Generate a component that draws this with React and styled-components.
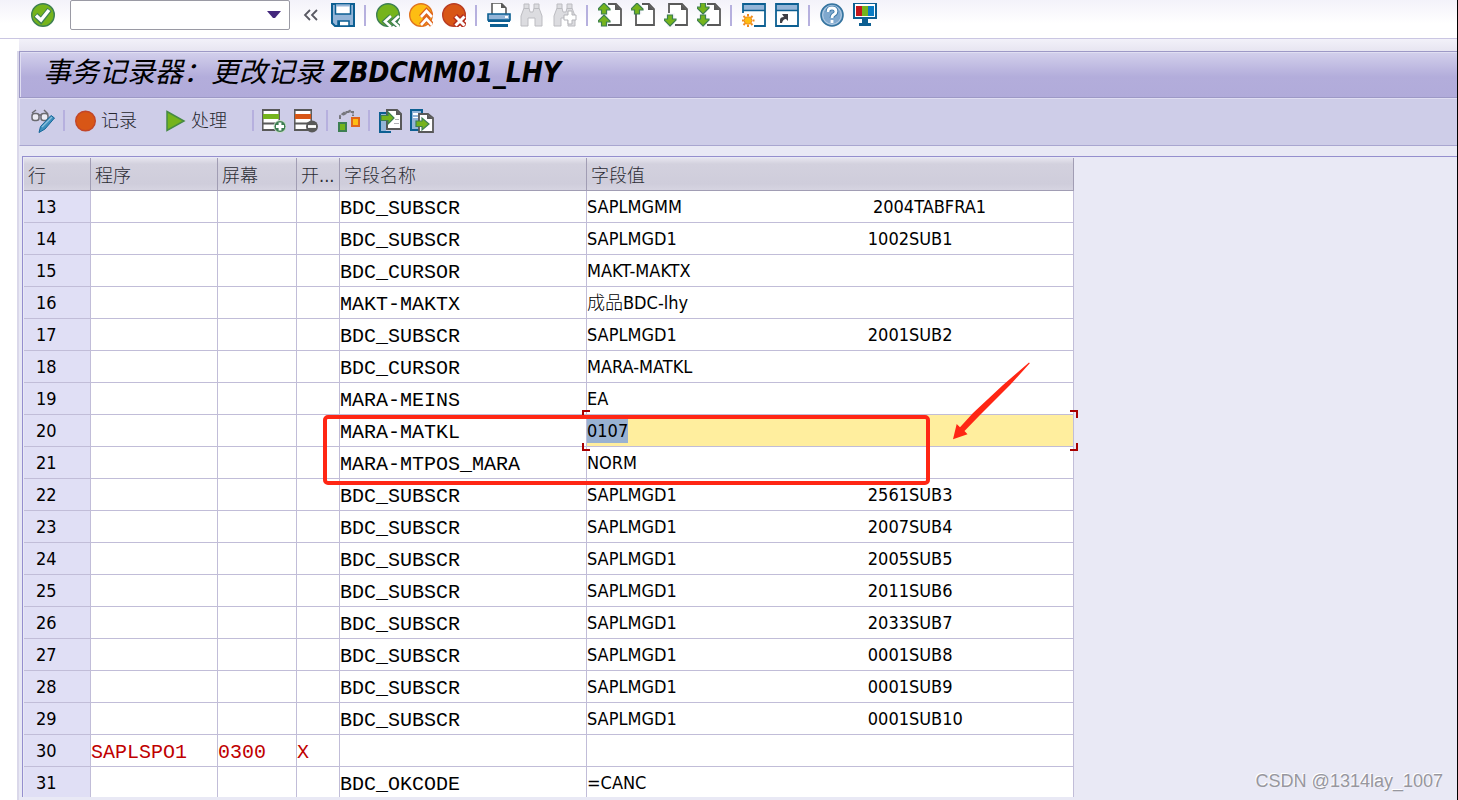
import React from 'react';
import styled, { createGlobalStyle } from "styled-components";

const GlobalStyle = createGlobalStyle`
    * {
        box-sizing: border-box;
    }
    body {
        margin: 0;
        background: #ffffff;
        color: #000000;
        font-family: "DejaVu Sans Condensed", "Noto Sans", "Noto Sans CJK SC", sans-serif;
        font-size: 18px;
    }
`;

const Page = styled.div`
    position: relative;
    display: flex;
    flex-direction: column;
    height: 100vh;
    overflow: hidden;
    border-right: 1px solid #000000;
`;

const SystemBar = styled.header`
    flex: none;
    display: flex;
    align-items: center;
    gap: 9px;
    height: 39px;
    padding: 0 31px 8px;
    background: linear-gradient(#f3f2fa, #ffffff 24px);
    border-bottom: 1px solid #cac6e2;
`;

const ToolButton = styled.button`
    flex: none;
    display: flex;
    align-items: center;
    gap: 4px;
    padding: 0;
    border: none;
    background: none;
    color: #26262e;
    font-family: inherit;
    font-size: 18px;
    font-weight: 300;
    line-height: 24px;
    white-space: nowrap;
`;

const Divider = styled.span`
    flex: none;
    width: ${({ $wide }) => $wide ? "3px" : "2px"};
    height: 21px;
    border-left: 2px solid #b6b0de;
`;

const CommandBox = styled.div`
    flex: none;
    display: flex;
    align-items: center;
    width: 220px;
    height: 30px;
    margin: 0 3px 0 6px;
    padding-right: 8px;
    border: 1px solid #9a9aa4;
    border-radius: 2px;
    background: #ffffff;
`;

const CommandInput = styled.input`
    flex: 1;
    min-width: 0;
    height: 100%;
    border: none;
    outline: none;
    background: none;
    font-family: inherit;
    font-size: 18px;
`;

const Main = styled.main`
    flex: 1;
    display: flex;
    flex-direction: column;
    min-height: 0;
    padding: 12px 0 0 17px;
    background: linear-gradient(#f2f1f9, #e7e5f1 12px, #ffffff 12px, #ffffff) 19px 0 no-repeat;
`;

const Session = styled.section`
    flex: 1;
    display: flex;
    flex-direction: column;
    min-height: 0;
    border-left: 2px solid #dad8ea;
    background: #e9e9f5;
`;

const TitleBar = styled.div`
    flex: none;
    display: flex;
    align-items: center;
    height: 47px;
    padding: 0 23px 4px;
    border: 1px solid #9d99c6;
    border-right: none;
    background: linear-gradient(#d3d0ec, #b3addb 55%, #b1abda);
    box-shadow: inset 1px 1px 0 #e0def2;
`;

const Title = styled.h1`
    margin: 0;
    font-size: 28px;
    font-style: italic;
    font-weight: 400;
    line-height: 40px;
    white-space: nowrap;
`;

const AppBar = styled.div`
    flex: none;
    display: flex;
    align-items: center;
    gap: 8px;
    height: 48px;
    padding: 0 11px 2px;
    background: #cecde8;
    border-left: 1px solid #e6e4f4;
    border-bottom: 1px solid #a9a6d0;
    box-shadow: inset 0 1px 0 #e0def2;
`;

const Actions = styled.div`
    display: flex;
    gap: 26px;
    margin-right: 17px;
`;

const GridArea = styled.div`
    flex: 1;
    min-height: 0;
    margin: 10px 0 3px 3px;
    padding: 1px 0 0 1px;
    border-top: 1px solid #958fce;
    border-left: 1px solid #958fce;
    overflow: hidden;
`;

const GridFrame = styled.div`
    position: relative;
    width: max-content;
`;

const Grid = styled.table`
    width: 1050px;
    table-layout: fixed;
    border-collapse: separate;
    border-spacing: 0;
`;

const HeadCell = styled.th`
    height: 33px;
    padding: 4px 4px 0;
    border-right: 1px solid #a19db4;
    border-bottom: 1px solid #a19db4;
    background: linear-gradient(#e6e5ee, #d3d1de 6px, #cfcddb 80%, #d6d4e1);
    color: #2c2c34;
    font-weight: 300;
    line-height: 24px;
    text-align: left;
    white-space: nowrap;
`;

const LineCell = styled.th`
    height: 32px;
    padding: 0 12px;
    border-right: 1px solid #c1bdd8;
    border-bottom: 1px solid #c1bdd8;
    background: #e0dff5;
    font-weight: 400;
    line-height: 24px;
    text-align: left;
`;

const Cell = styled.td`
    position: relative;
    z-index: ${({ $active }) => $active ? 1 : "auto"};
    height: 32px;
    padding: 0;
    border-right: 1px solid #c1bdd8;
    border-bottom: 1px solid #c1bdd8;
    background: ${({ $active }) => $active ? "#ffee9e" : "#ffffff"};
    font-weight: 300;
    line-height: 24px;
    white-space: nowrap;
`;

const CodeCell = styled(Cell)`
    padding-top: 4px;
    color: ${({ $screen }) => $screen ? "#c00000" : "#000000"};
    font-family: "Liberation Mono", monospace;
    font-size: 20px;
`;

const Value = styled.div`
    display: flex;
    gap: 191px;
`;

const Selected = styled.span`
    background: #99b2d2;
`;

const Corner = styled.span`
    position: absolute;
    ${({ $v }) => $v}: -5px;
    ${({ $h }) => $h}: -5px;
    width: 8px;
    height: 8px;
    border: 0 solid #a80000;
    border-${({ $v }) => $v}-width: 2px;
    border-${({ $h }) => $h}-width: 2px;
`;

const Frame = styled.div`
    position: absolute;
    z-index: 2;
    left: 299px;
    top: 257px;
    width: 607px;
    height: 70px;
    border: 4px solid #ff2614;
    border-radius: 5px;
    pointer-events: none;
`;

const Arrow = styled.svg`
    position: absolute;
    z-index: 2;
    left: 928px;
    top: 203px;
    pointer-events: none;
`;

const Watermark = styled.div`
    position: absolute;
    right: 14px;
    bottom: 7px;
    color: #97979e;
    font-family: "Liberation Sans", Arial, sans-serif;
    font-size: 18px;
    line-height: 24px;
    text-shadow: -1px -1px 0 #ffffff;
`;

const Svg = ({ width = 24, children }) => (
    <svg width={width} height="24" viewBox={`0 0 ${width} 24`} fill="none" aria-hidden="true">
        {children}
    </svg>
);

const CheckIcon = () => (
    <Svg>
        <circle cx="12" cy="12" r="11.3" fill="#75b41c" stroke="#3d7f52" strokeWidth="1.4" />
        <path d="M4.500 12l5.500 5.500 8.500-11" stroke="#3d7f52" strokeWidth="5.500" />
        <path d="M5 12.5l5 4.500 8-10" stroke="#fff" strokeWidth="3.400" />
    </Svg>
);

const CollapseIcon = () => (
    <Svg width={20}>
        <path d="M8 7l-5 5 5 5M15 7l-5 5 5 5" stroke="#595963" strokeWidth="1.8" />
    </Svg>
);

const SaveIcon = () => (
    <Svg>
        <path d="M1 1h22v22H4l-3-3z" fill="#94b5d8" stroke="#0c5f92" strokeWidth="2" />
        <path d="M4.500 1h15v10h-15z" fill="#fff" stroke="#0c5f92" strokeWidth="1.500" />
        <path d="M5 1.500h14v2H5z" fill="#94b5d8" />
        <path d="M7 23v-5h11v5z" fill="#fff" stroke="#0c5f92" strokeWidth="1.500" />
        <path d="M7 18h2v5H7z" fill="#0c5f92" />
    </Svg>
);

const BackIcon = () => (
    <Svg>
        <circle cx="12" cy="12" r="11.3" fill="#75b41c" stroke="#3d7f52" strokeWidth="1.4" />
        <path d="M15 13l-6 5.500 6 5.500M23 13l-6 5.500 6 5.500" stroke="#3d7f52" strokeWidth="5" />
        <path d="M15 13l-6 5.500 6 5.500M23 13l-6 5.500 6 5.500" stroke="#fff" strokeWidth="2.600" />
    </Svg>
);

const ExitIcon = () => (
    <Svg>
        <circle cx="12" cy="12" r="11.3" fill="#fdbd12" stroke="#e07420" strokeWidth="1.4" />
        <path d="M12 14l5.500-6 5.500 6M12 22l5.500-6 5.500 6" stroke="#e0651c" strokeWidth="5.500" />
        <path d="M12 14l5.500-6 5.500 6M12 22l5.500-6 5.500 6" stroke="#fff" strokeWidth="2.600" />
    </Svg>
);

const CancelIcon = () => (
    <Svg>
        <circle cx="12" cy="12" r="11.3" fill="#d85616" stroke="#b93c22" strokeWidth="1.4" />
        <path d="M13 13l10 10M23 13L13 23" stroke="#b32d1c" strokeWidth="6" />
        <path d="M13.500 13.500l9 9M22.500 13.500l-9 9" stroke="#fff" strokeWidth="3" />
    </Svg>
);

const PrintIcon = () => (
    <Svg>
        <path d="M5 12V0h9l5 5v7" fill="#fff" stroke="#595959" strokeWidth="1.600" />
        <path d="M14 0v5h5z" fill="#595959" />
        <path d="M1 11h22v6H1z" fill="#94b5d8" stroke="#0c5f92" strokeWidth="1.600" />
        <path d="M18 13h3v2h-3z" fill="#fff" />
        <path d="M1 17h22v2H1zM3 21h18v3H3z" fill="#0c5f92" />
    </Svg>
);

const FindIcon = ({ plus }) => (
    <Svg>
        <path d="M4 1h5v4l1 4h3l1-4V1h5v4l3 8v10h-7v-8h-7v8H1V13l3-8z" fill="#dcdce0" stroke="#bcbcc1" />
        <path d="M4 5.500h5M14 5.500h5" stroke="#bcbcc1" />
        {plus && <path d="M15 8h4v4h4v5h-4v4h-4v-4h-4v-5h4z" fill="#fff" stroke="#b5b5ba" />}
    </Svg>
);

const UP = "M6 0l6 6v1H8.500v4h-5V7H0V6z";
const DOWN = "M6 11l6-6V4H8.500V0h-5v4H0v1z";

const PageIcon = ({ down, double }) => (
    <Svg>
        <path d="M5 1h13l5 5v16H5z" fill="#fff" stroke="#595959" strokeWidth="1.800" />
        <path d="M17 1v6h6z" fill="#595959" />
        <path d={down && !double ? "M3 10h8v14H3z" : double ? "M3 0h7v24H3z" : "M3 0h8v11H3z"} fill="#f8f7fc" />
        {(!down || double) && <path d={down ? DOWN : UP} fill="#75b41c" stroke="#3d7f52" strokeWidth="1.200" />}
        {(down || double) && (
            <path d={down ? DOWN : UP} transform="translate(0 12)" fill="#75b41c" stroke="#3d7f52" strokeWidth="1.200" />
        )}
    </Svg>
);

const WindowIcon = ({ shortcut }) => (
    <Svg>
        <path d="M1 1h22v22H1z" fill="#fff" stroke="#0c5f92" strokeWidth="1.800" />
        <path d="M2 2h20v5H2z" fill="#94b5d8" />
        <path d="M1 7.500h22" stroke="#0c5f92" strokeWidth="1.500" />
        {shortcut ? (
            <path d="M5 20v-3q0-3 4-3l-2-3h6v7l-2-2q-3 0-4 4z" fill="#3e3e44" />
        ) : (
            <g>
                <path d="M0 10h12v14H0z" fill="#fff" />
                <circle cx="6" cy="17.500" r="3.800" fill="#fdbd12" stroke="#f08a1c" />
                <path d="M6 11v2M6 22v2M0 17.500h2M10.500 17.500h2M1.500 13l1.500 1.500M9 20.500l1.500 1.500M1.500 22L3 20.500M9 14.500l1.500-1.500" stroke="#f08a1c" strokeWidth="2" />
            </g>
        )}
    </Svg>
);

const HelpIcon = () => (
    <Svg>
        <circle cx="12" cy="12" r="11" fill="#7fa8ce" stroke="#35749f" strokeWidth="1.600" />
        <circle cx="12" cy="12" r="9.300" stroke="#b9cfe6" strokeWidth="1" />
        <path d="M8 9q0-4 4-4t4 3.500q0 2-2 3t-2 3.500" stroke="#3a78a8" strokeWidth="4.600" />
        <path d="M8 9q0-4 4-4t4 3.500q0 2-2 3t-2 3.500M12 17v3" stroke="#fff" strokeWidth="2.800" />
    </Svg>
);

const MonitorIcon = () => (
    <Svg>
        <path d="M1 0h22v15H1z" fill="#fff" stroke="#0c5f92" strokeWidth="2" />
        <path d="M3 3h6v10H3z" fill="#c4161c" />
        <path d="M9 3h6v10H9z" fill="#75b41c" />
        <path d="M15 3h6v10h-6z" fill="#0a7cc4" />
        <path d="M9 16h6v4h3v3H6v-3h3z" fill="#0c5f92" />
    </Svg>
);

const DisplayIcon = () => (
    <Svg>
        <path d="M1 4l4-3M13 1l4 4M8 6h3" stroke="#6b6b70" strokeWidth="1.500" />
        <rect x="1" y="4.500" width="7" height="7" rx="2.500" fill="#ececf4" stroke="#6b6b70" strokeWidth="1.500" />
        <rect x="10" y="4.500" width="7" height="7" rx="2.500" fill="#ececf4" stroke="#6b6b70" strokeWidth="1.500" />
        <path d="M8 23.500l1.500-6L20 6.500l3.500 2.500L14 20z" fill="#3d8fbd" stroke="#146698" />
        <path d="M11 18L21 8" stroke="#8fc0dc" strokeWidth="1.200" />
    </Svg>
);

const RecordIcon = () => (
    <Svg>
        <circle cx="12.500" cy="12" r="9.800" fill="#d85616" stroke="#c24628" strokeWidth="1.400" />
    </Svg>
);

const RunIcon = () => (
    <Svg>
        <path d="M4 2.500L21 12 4 21.500z" fill="#75b41c" stroke="#468a43" strokeWidth="1.500" />
    </Svg>
);

const RowIcon = ({ remove }) => (
    <Svg>
        <path d="M1 1h16v20H1z" fill="#fff" />
        <path d="M0 1h18M0 14.500h18M0 21h14" stroke="#595959" strokeWidth="1.800" />
        <path d="M.8 0v22M17.200 0v15" stroke="#595959" strokeWidth="1.500" />
        <path d="M1 5h16v5H1z" fill={remove ? "#d85616" : "#75b41c"} />
        <circle cx="18" cy="17.500" r="6" fill={remove ? "#595959" : "#3d7f52"} stroke="#cfe3cc" strokeWidth={remove ? 0 : 1} />
        <path d={remove ? "M14 17.500h8" : "M14 17.500h8M18 13.500v8"} stroke="#fff" strokeWidth="2.800" />
    </Svg>
);

const StepIcon = () => (
    <Svg>
        <path d="M4 10V7l5-4h8v4M7 6l8-5" stroke="#77777e" strokeWidth="2" strokeDasharray="4 1" />
        <path d="M3 14h7v8H3z" fill="#75b41c" stroke="#3d7f52" strokeWidth="2" />
        <path d="M16 9h7v8h-7z" fill="#fdbd12" stroke="#e0651c" strokeWidth="2" />
    </Svg>
);

const ImportIcon = () => (
    <Svg>
        <path d="M1 4h7v19H1z" fill="#94b5d8" />
        <path d="M8 4H2v19h11" stroke="#0c5f92" strokeWidth="2" />
        <path d="M9 1h10l4 4v15H9z" fill="#fff" stroke="#595959" strokeWidth="2" />
        <path d="M18 1v5h5z" fill="#595959" />
        <path d="M17 10.500h4M16 14.500h5" stroke="#b0b0b6" />
        <path d="M3 6.500h7V3l6 6-6 6v-3.500H3z" fill="#75b41c" stroke="#3d7f52" strokeWidth="1.200" />
    </Svg>
);

const ExportIcon = () => (
    <Svg>
        <path d="M1 1h11v20H1z" fill="#94b5d8" stroke="#0c5f92" strokeWidth="2" />
        <path d="M3 4h5v2H3zM3 8h5v1H3z" fill="#fff" />
        <path d="M9 5h9l5 4v14H9z" fill="#fff" stroke="#595959" strokeWidth="1.800" />
        <path d="M17 5v5h6z" fill="#595959" />
        <path d="M6 12h6V9l7 6-7 6v-3.500H6z" fill="#75b41c" stroke="#3d7f52" strokeWidth="1.200" />
    </Svg>
);

const systemTools = [
    ["保存", SaveIcon],
    null,
    ["返回", BackIcon],
    ["退出", ExitIcon],
    ["取消", CancelIcon],
    null,
    ["打印", PrintIcon],
    ["查找", FindIcon],
    ["查找下一个", FindIcon, { plus: true }],
    null,
    ["第一页", PageIcon, { double: true }],
    ["上一页", PageIcon],
    ["下一页", PageIcon, { down: true }],
    ["最后一页", PageIcon, { down: true, double: true }],
    null,
    ["新建会话", WindowIcon],
    ["创建快捷方式", WindowIcon, { shortcut: true }],
    null,
    ["帮助", HelpIcon],
    ["定制本地布局", MonitorIcon],
];

const rowTools = [
    null,
    ["插入行", RowIcon],
    ["删除行", RowIcon, { remove: true }],
    null,
    ["步骤", StepIcon],
    null,
    ["导入", ImportIcon],
    ["导出", ExportIcon],
];

const columns = [
    { label: "行", width: 67 },
    { label: "程序", width: 127 },
    { label: "屏幕", width: 79 },
    { label: "开...", width: 43 },
    { label: "字段名称", width: 247 },
    { label: "字段值", width: 487 },
];

const rows = [
    { line: 13, field: "BDC_SUBSCR", value: ["SAPLMGMM", "2004TABFRA1"] },
    { line: 14, field: "BDC_SUBSCR", value: ["SAPLMGD1", "1002SUB1"] },
    { line: 15, field: "BDC_CURSOR", value: ["MAKT-MAKTX"] },
    { line: 16, field: "MAKT-MAKTX", value: ["成品BDC-lhy"] },
    { line: 17, field: "BDC_SUBSCR", value: ["SAPLMGD1", "2001SUB2"] },
    { line: 18, field: "BDC_CURSOR", value: ["MARA-MATKL"] },
    { line: 19, field: "MARA-MEINS", value: ["EA"] },
    { line: 20, field: "MARA-MATKL", value: ["0107"], active: true },
    { line: 21, field: "MARA-MTPOS_MARA", value: ["NORM"] },
    { line: 22, field: "BDC_SUBSCR", value: ["SAPLMGD1", "2561SUB3"] },
    { line: 23, field: "BDC_SUBSCR", value: ["SAPLMGD1", "2007SUB4"] },
    { line: 24, field: "BDC_SUBSCR", value: ["SAPLMGD1", "2005SUB5"] },
    { line: 25, field: "BDC_SUBSCR", value: ["SAPLMGD1", "2011SUB6"] },
    { line: 26, field: "BDC_SUBSCR", value: ["SAPLMGD1", "2033SUB7"] },
    { line: 27, field: "BDC_SUBSCR", value: ["SAPLMGD1", "0001SUB8"] },
    { line: 28, field: "BDC_SUBSCR", value: ["SAPLMGD1", "0001SUB9"] },
    { line: 29, field: "BDC_SUBSCR", value: ["SAPLMGD1", "0001SUB10"] },
    { line: 30, program: "SAPLSPO1", screen: "0300", start: "X", value: [] },
    { line: 31, field: "BDC_OKCODE", value: ["=CANC"] },
];

const Tools = ({ items, wide }) => items.map((item, i) => {
    if (!item) return <Divider key={i} $wide={wide} />;
    const [label, Icon, props] = item;
    return (
        <ToolButton key={i} type="button" aria-label={label}>
            <Icon {...props} />
        </ToolButton>
    );
});

const Row = ({ row }) => (
    <tr>
        <LineCell scope="row">{row.line}</LineCell>
        <CodeCell $screen>{row.program}</CodeCell>
        <CodeCell $screen>{row.screen}</CodeCell>
        <CodeCell $screen>{row.start}</CodeCell>
        <CodeCell>{row.field}</CodeCell>
        <Cell $active={row.active}>
            <Value>
                {row.value.map((part) => (
                    row.active ? <Selected key={part}>{part}</Selected> : <span key={part}>{part}</span>
                ))}
            </Value>
            {row.active && (
                <>
                    <Corner $v="top" $h="left" />
                    <Corner $v="top" $h="right" />
                    <Corner $v="bottom" $h="left" />
                    <Corner $v="bottom" $h="right" />
                </>
            )}
        </Cell>
    </tr>
);

const App = () => {
    return (
        <Page>
            <GlobalStyle />
            <SystemBar>
                <ToolButton type="button" aria-label="回车">
                    <CheckIcon />
                </ToolButton>
                <CommandBox>
                    <CommandInput type="text" aria-label="命令" />
                    <ToolButton type="button" aria-label="命令历史">
                        <svg width="14" height="8" viewBox="0 0 14 8" aria-hidden="true">
                            <path d="M0 0h14L8 7H6z" fill="#43277c" />
                        </svg>
                    </ToolButton>
                </CommandBox>
                <ToolButton type="button" aria-label="收起">
                    <CollapseIcon />
                </ToolButton>
                <Tools items={systemTools} wide />
            </SystemBar>
            <Main>
                <Session>
                    <TitleBar>
                        <Title>事务记录器：更改记录 <b>ZBDCMM01_LHY</b></Title>
                    </TitleBar>
                    <AppBar>
                        <ToolButton type="button" aria-label="显示/更改">
                            <DisplayIcon />
                        </ToolButton>
                        <Divider />
                        <Actions>
                            <ToolButton type="button"><RecordIcon />记录</ToolButton>
                            <ToolButton type="button"><RunIcon />处理</ToolButton>
                        </Actions>
                        <Tools items={rowTools} />
                    </AppBar>
                    <GridArea>
                        <GridFrame>
                            <Grid>
                                <colgroup>
                                    {columns.map((col) => <col key={col.label} width={col.width} />)}
                                </colgroup>
                                <thead>
                                    <tr>
                                        {columns.map((col) => (
                                            <HeadCell key={col.label} scope="col">{col.label}</HeadCell>
                                        ))}
                                    </tr>
                                </thead>
                                <tbody>
                                    {rows.map((row) => <Row key={row.line} row={row} />)}
                                </tbody>
                            </Grid>
                            <Frame />
                            <Arrow width="80" height="80" viewBox="0 0 80 80" aria-hidden="true">
                                <path d="M1 78.300L4.700 63 8 66.300 21 52 51 24 77 1.500l.8.8L58 24 28 54 12.500 70l3 3.300z" fill="#ff2614" />
                            </Arrow>
                        </GridFrame>
                    </GridArea>
                </Session>
            </Main>
            <Watermark>CSDN @1314lay_1007</Watermark>
        </Page>
    )
}

export default App;
